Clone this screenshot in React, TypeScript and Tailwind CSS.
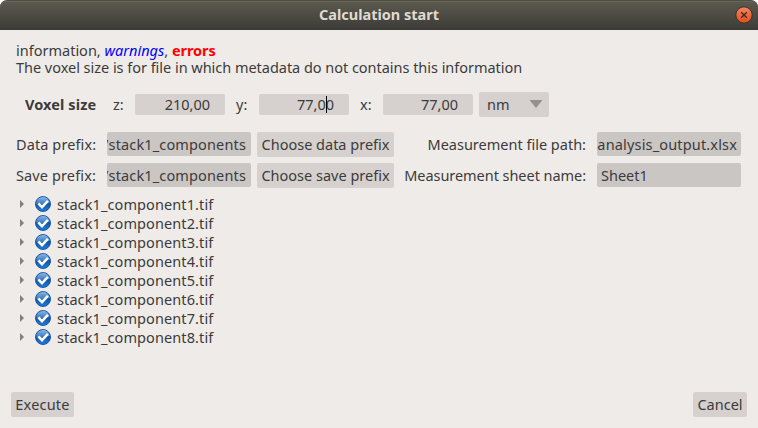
import type { ReactNode } from "react";

const files = [1, 2, 3, 4, 5, 6, 7, 8].map((n) => `stack1_component${n}.tif`);

function Button({ children, className }: { children: ReactNode; className: string }) {
  return (
    <button className={`flex h-[25px] shrink-0 items-center justify-center rounded-[2px] bg-[#d6d1ce] ${className}`}>
      {children}
    </button>
  );
}

function Field({ children, className }: { children: ReactNode; className: string }) {
  return (
    <div className={`flex h-6 w-36 shrink-0 items-center overflow-hidden rounded-[2px] bg-[#cac6c4] ${className}`}>
      {children}
    </div>
  );
}

function Spin({ children }: { children: ReactNode }) {
  return (
    <div className="flex h-[21px] w-[90px] shrink-0 items-center justify-end rounded-[2px] bg-[#d6d1ce] pr-[15px]">
      {children}
    </div>
  );
}

function CheckIcon() {
  return (
    <svg width="16" height="16" viewBox="0 0 16 16" className="mb-px ml-[11px] shrink-0">
      <defs>
        <linearGradient id="ball" x1="0" y1="0" x2="0" y2="1">
          <stop offset="0" stopColor="#2f74c0" />
          <stop offset="0.5" stopColor="#0f55a8" />
          <stop offset="1" stopColor="#1c80e0" />
        </linearGradient>
        <linearGradient id="gloss" x1="0" y1="0" x2="0" y2="1">
          <stop offset="0" stopColor="#9cc2ea" stopOpacity="0.85" />
          <stop offset="1" stopColor="#5b96d6" stopOpacity="0.5" />
        </linearGradient>
      </defs>
      <circle cx="8" cy="8" r="7.5" fill="url(#ball)" stroke="#124f98" strokeWidth="0.9" />
      <path d="M1.3 8.2A6.7 6.7 0 0 1 14.7 7C11.5 6.4 6 9.5 1.3 8.2Z" fill="url(#gloss)" />
      <path d="M3.4 7.5L7 11.1L12.9 4.9" fill="none" stroke="#fff" strokeWidth="2.5" />
    </svg>
  );
}

export default function App() {
  return (
    <div className="h-[428px] w-[758px] overflow-hidden bg-white">
      <div className="flex h-[428px] flex-col rounded-t-[7px] bg-[#efebe8] font-['Noto_Sans',sans-serif] text-[14.5px] leading-[17px] whitespace-nowrap text-[#3b3b3b]">
        <header className="grid h-[30px] shrink-0 grid-cols-[1fr_auto_1fr] items-center rounded-t-[7px] border-t border-[#504e44] bg-linear-to-b from-[#5d5a4f] to-[#3c3b37] shadow-[inset_0_1px_0_#67645a]">
          <span />
          <h1 className="pb-[2px] font-bold text-[#dfdbd2]">Calculation start</h1>
          <svg width="18" height="18" viewBox="0 0 18 18" className="mr-[5px] mb-px justify-self-end">
            <defs>
              <linearGradient id="close" x1="0" y1="0" x2="0" y2="1">
                <stop offset="0" stopColor="#f5855f" />
                <stop offset="1" stopColor="#e14c1b" />
              </linearGradient>
            </defs>
            <circle cx="9" cy="9" r="8.2" fill="url(#close)" stroke="#36322b" strokeWidth="1" />
            <path d="M6.2 6.2L11.8 11.8M11.8 6.2L6.2 11.8" stroke="#3d2a1e" strokeWidth="1.3" />
          </svg>
        </header>

        <p className="mt-3 ml-4">
          information, <i className="text-[#0000ff]">warnings</i>,{" "}
          <b className="tracking-[-0.05px] text-[#ff0000]">errors</b>
          <br />
          <span className="tracking-[-0.03px]">
            The voxel size is for file in which metadata do not contains this information
          </span>
        </p>

        <div className="mt-4 flex h-[25px] items-center pl-[25px]">
          <b className="w-[88px] tracking-[0.1px]">Voxel size</b>
          <span className="w-[22px]">z:</span>
          <Spin>210,00</Spin>
          <span className="ml-[11px] w-[23px]">y:</span>
          <Spin>
            <span className="relative">
              77,00
              <i className="absolute top-0 right-[7px] h-[17px] w-px bg-black" />
            </span>
          </Spin>
          <span className="ml-[11px] w-[23px]">x:</span>
          <Spin>77,00</Spin>
          <div className="ml-1.5 flex h-[25px] w-[70px] items-center justify-between rounded-[2px] bg-[#d6d1ce] pr-1.5 pl-2">
            nm
            <svg width="14" height="8" viewBox="0 0 14 8" className="mb-0.5">
              <path d="M0.5 0H13.5L7 8Z" fill="#94908d" />
            </svg>
          </div>
        </div>

        <div className="mt-[15px] flex h-[25px] items-start pl-4">
          <span className="mt-1 w-[91px] tracking-[0.1px]">Data prefix:</span>
          <Field className="justify-end pr-[5px] tracking-[0.14px]">/stack1_components</Field>
          <Button className="ml-1.5 w-[137px]">Choose data prefix</Button>
          <span className="mt-1 ml-auto pr-[11px]">Measurement file path:</span>
          <Field className="mr-[17px] justify-end pr-1 tracking-[0.16px]">/analysis_output.xlsx</Field>
        </div>
        <div className="mt-1.5 flex h-[25px] items-start pl-4">
          <span className="mt-1 w-[91px] tracking-[0.12px]">Save prefix:</span>
          <Field className="justify-end pr-[5px] tracking-[0.14px]">/stack1_components</Field>
          <Button className="ml-1.5 w-[137px]">Choose save prefix</Button>
          <span className="mt-1 ml-auto pr-[11px] tracking-[-0.05px]">Measurement sheet name:</span>
          <Field className="mr-[17px] pl-1">Sheet1</Field>
        </div>

        <ul className="mt-[7px] ml-5">
          {files.map((name) => (
            <li key={name} className="flex h-[19px] items-center">
              <svg width="4" height="8" viewBox="0 0 4 8" className="mb-px shrink-0">
                <path d="M0 0L4 4L0 8Z" fill="#827f7c" />
              </svg>
              <CheckIcon />
              <span className="ml-1.5 tracking-[0.1px]">{name}</span>
            </li>
          ))}
        </ul>

        <footer className="mt-auto mb-[11px] flex justify-between pr-[11px] pl-[11px]">
          <Button className="w-[63px] tracking-[0.2px]">Execute</Button>
          <Button className="w-[54px]">Cancel</Button>
        </footer>
      </div>
    </div>
  );
}
